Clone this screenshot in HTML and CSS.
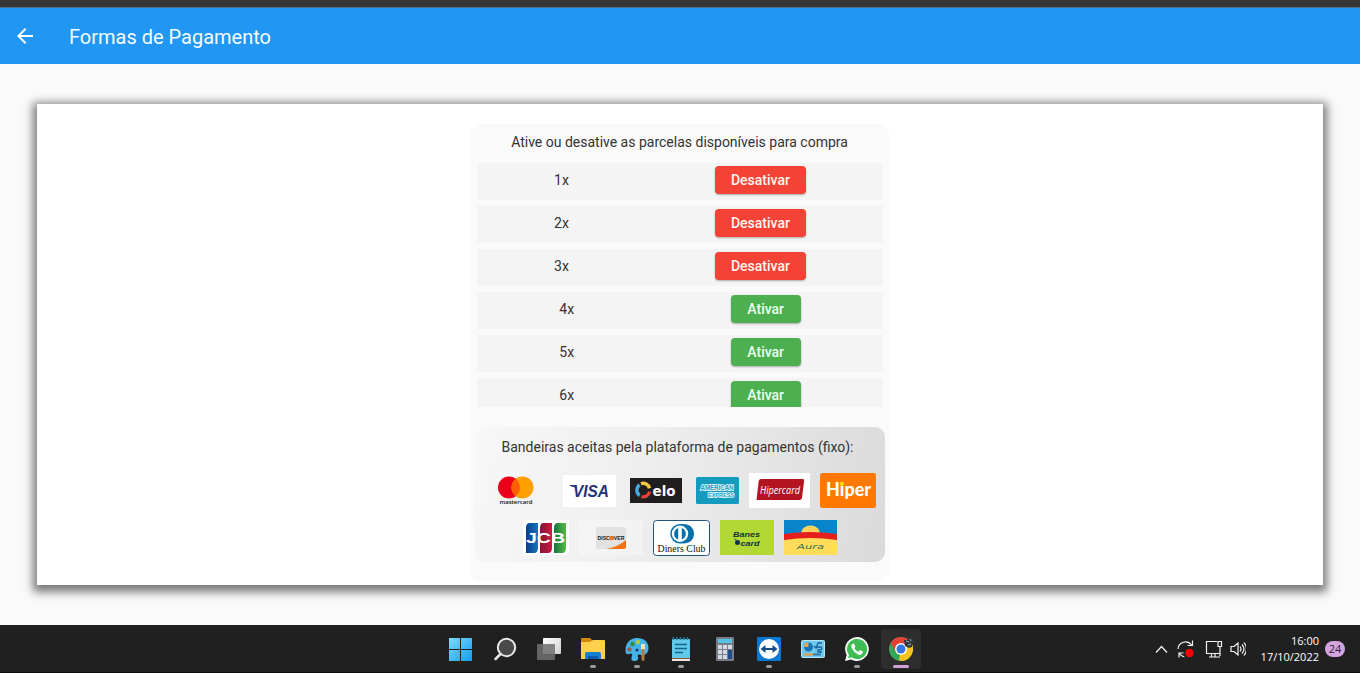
FILE: index.html
```html
<!DOCTYPE html>
<html lang="pt-BR">
<head>
<meta charset="utf-8">
<title>Formas de Pagamento</title>
<link rel="stylesheet" href="styles.css">
</head>
<body>
<div class="screen">
  <header class="appbar">
    <svg class="back" width="24" height="24" viewBox="0 0 24 24"><path fill="#fff" d="M20 11H7.830l5.590-5.590L12 4l-8 8 8 8 1.410-1.410L7.830 13H20v-2z"/></svg>
    <h1 class="title">Formas de Pagamento</h1>
  </header>
  <main class="content">
    <section class="card">
      <div class="panel">
        <p class="heading">Ative ou desative as parcelas disponíveis para compra</p>
        <div class="list">
          <div class="row"><span>1x</span><button class="btn off">Desativar</button></div>
          <div class="row"><span>2x</span><button class="btn off">Desativar</button></div>
          <div class="row"><span>3x</span><button class="btn off">Desativar</button></div>
          <div class="row"><span>4x</span><button class="btn on">Ativar</button></div>
          <div class="row"><span>5x</span><button class="btn on">Ativar</button></div>
          <div class="row"><span>6x</span><button class="btn on">Ativar</button></div>
        </div>
        <div class="brands">
          <p class="brands-title">Bandeiras aceitas pela plataforma de pagamentos (fixo):</p>
          <div class="brand-row first">
            <svg class="mastercard" width="37" height="35" viewBox="0 0 37 35">
              <circle cx="11" cy="14.500" r="11" fill="#eb001b"/><circle cx="24.500" cy="14.500" r="11" fill="#ff9f00"/>
              <path fill="#ff5f00" d="M17.700 5.800a11 11 0 0 1 0 17.400 11 11 0 0 1 0-17.400z"/>
              <text x="1.500" y="30.500" font-size="6" font-weight="600" textLength="33" fill="#111">mastercard</text>
            </svg>
            <svg class="visa" width="53" height="32" viewBox="0 0 53 32">
              <rect width="53" height="32" fill="#fff"/>
              <text class="logo-visa" x="10" y="22" font-size="16.500" textLength="36" lengthAdjust="spacingAndGlyphs" fill="#26337a">VISA</text>
              <path d="M7 10h6l1 3-7-2z" fill="#26337a"/>
            </svg>
            <svg class="elo" width="52" height="25" viewBox="0 0 52 25">
              <rect width="52" height="25" fill="#211e1f"/>
              <g fill="none" stroke-width="3.400"><path d="M11 5.700A6.600 6.600 0 0 1 19.500 10.200" stroke="#fbc73a"/><path d="M9.600 17.500A6.600 6.600 0 0 1 9.600 6.800" stroke="#46a8dc"/><path d="M19.700 13.700A6.600 6.600 0 0 1 11.500 18.600" stroke="#e24436"/></g>
              <text class="logo-round" x="22.500" y="17.500" font-size="14.500" textLength="23" lengthAdjust="spacingAndGlyphs" fill="#fff">elo</text>
            </svg>
            <svg class="amex" width="43" height="27" viewBox="0 0 43 27">
              <rect width="43" height="27" rx="1.500" fill="#149bbd"/>
              <g class="logo-sans" fill="#149bbd" stroke="#eefcff" stroke-width="1.600" paint-order="stroke">
                <text x="4.500" y="13" font-size="6.500" textLength="33" lengthAdjust="spacingAndGlyphs">AMERICAN</text>
                <text x="12" y="19.800" font-size="6" textLength="26" lengthAdjust="spacingAndGlyphs">EXPRESS</text>
              </g>
            </svg>
            <svg class="hipercard" width="61" height="35" viewBox="0 0 61 35">
              <rect width="61" height="35" fill="#fff"/>
              <path d="M12 6h41.500q2 0 1.600 2L53 25q-.4 2-2.400 2H7.500L9.700 8q.4-2 2.300-2z" fill="#b41421"/>
              <text class="logo-thin" x="11" y="20.500" font-size="11" textLength="40" lengthAdjust="spacingAndGlyphs" fill="#fff">Hipercard</text>
            </svg>
            <svg class="hiper" width="56" height="35" viewBox="0 0 56 35">
              <rect width="56" height="35" rx="2.500" fill="#ff7900"/>
              <text class="logo-hiper" x="6" y="23" font-size="18" textLength="45" lengthAdjust="spacingAndGlyphs" fill="#fff">Hiper</text>
              <circle cx="21.700" cy="11" r="2" fill="#ffd800"/>
            </svg>
          </div>
          <div class="brand-row second">
            <svg class="jcb" width="46" height="35" viewBox="0 0 46 35">
              <defs>
                <linearGradient id="jb"><stop stop-color="#063f8c"/><stop offset="1" stop-color="#1675b9"/></linearGradient>
                <linearGradient id="jr"><stop stop-color="#7c1739"/><stop offset="1" stop-color="#d21940"/></linearGradient>
                <linearGradient id="jg"><stop stop-color="#137541"/><stop offset="1" stop-color="#58b947"/></linearGradient>
              </defs>
              <path d="M5 0h41v29q0 6-5 6H0V6q0-6 5-6z" fill="#fff"/>
              <path d="M7 3h8v25q0 5-4 5H3V8q0-5 4-5z" fill="url(#jb)"/>
              <path d="M21 3h8v25q0 5-4 5h-8V8q0-5 4-5z" fill="url(#jr)"/>
              <path d="M35 3h8v25q0 5-4 5h-8V8q0-5 4-5z" fill="url(#jg)"/>
              <text class="logo-sans" x="3" y="22.500" font-size="14.500" textLength="39" lengthAdjust="spacingAndGlyphs" fill="#fff">JCB</text>
            </svg>
            <svg class="discover" width="64" height="35" viewBox="0 0 64 35">
              <defs><pattern id="check" width="2" height="2" patternUnits="userSpaceOnUse"><path d="M0 0h1v1H0zM1 1h1v1H1z" fill="#fff" opacity=".55"/></pattern></defs>
              <rect width="64" height="35" fill="url(#check)"/>
              <rect x="17" y="7" width="30" height="22" rx="2" fill="#e2e2e2"/>
              <path d="M47 20v7q0 2-2 2H27q12-2 20-9z" fill="#f47216"/>
              <text class="logo-sans" x="18.500" y="20.200" font-size="6" textLength="27" lengthAdjust="spacingAndGlyphs" fill="#171717">DISCOVER</text>
              <circle cx="32.500" cy="18" r="2.200" fill="#f47216"/>
            </svg>
            <svg class="diners" width="57" height="36" viewBox="0 0 57 36">
              <rect x=".5" y=".5" width="56" height="35" rx="3" fill="#fff" stroke="#24527b"/>
              <path d="M27 4h3c7 0 11 4 11 9.800S37 23.500 30 23.500h-3a9.750 9.750 0 0 1 0-19.500z" fill="#0871a9"/>
              <circle cx="27" cy="13.800" r="8.200" fill="#fff"/>
              <path d="M25.200 8a6.200 6.200 0 0 0 0 11.600zM28.800 8a6.200 6.200 0 0 1 0 11.600z" fill="#0871a9"/>
              <text class="logo-roman" x="4.500" y="31.500" font-size="10" textLength="48" lengthAdjust="spacingAndGlyphs" fill="#111">Diners Club</text>
            </svg>
            <svg class="banes" width="54" height="35" viewBox="0 0 54 35">
              <rect width="54" height="35" rx="1" fill="#b3d836"/>
              <g class="logo-visa" fill="#12323f"><text x="13" y="17" font-size="8" textLength="27" lengthAdjust="spacingAndGlyphs">Banes</text><text x="20.500" y="25.500" font-size="8" textLength="19" lengthAdjust="spacingAndGlyphs">card</text></g>
              <circle cx="17.500" cy="22.500" r="2.500" fill="#12323f"/><circle cx="15.500" cy="19.500" r="1" fill="#347b56"/>
            </svg>
            <svg class="aura" width="53" height="35" viewBox="0 0 53 35">
              <rect width="53" height="35" fill="#0884ca"/>
              <ellipse cx="26.500" cy="13.500" rx="9.500" ry="8" fill="#ffd35a"/>
              <path d="M0 14Q26 10 53 14v7H0z" fill="#e5201c"/>
              <path d="M0 20Q26 16 53 20v15H0z" fill="#ffdc5a"/>
              <text class="logo-wide" x="13" y="29" font-size="7" textLength="27" lengthAdjust="spacingAndGlyphs" fill="#2c6c55">Aura</text>
            </svg>
          </div>
        </div>
      </div>
    </section>
  </main>
  <footer class="taskbar">
    <nav class="apps">
      <div class="app"><svg width="32" height="32" viewBox="0 0 32 32"><defs><linearGradient id="win" x2="1" y2="1"><stop stop-color="#7ddcfc"/><stop offset="1" stop-color="#139bf0"/></linearGradient></defs><path fill="url(#win)" d="M4 4h11v11H4V4zM16 4h11v11H16zM4 16h11v11H4zM16 16h11v11H16z"/></svg></div>
      <div class="app"><svg width="32" height="32" viewBox="0 0 32 32"><circle cx="17.500" cy="13.500" r="8.700" fill="#4a4a4a" stroke="#e9e9e9" stroke-width="2"/><path d="M11.500 20l-5 5" stroke="#e9e9e9" stroke-width="2.500" stroke-linecap="round"/></svg></div>
      <div class="app"><svg width="32" height="32" viewBox="0 0 32 32"><defs><linearGradient id="tv" x2="1" y2="1"><stop stop-color="#fff"/><stop offset="1" stop-color="#d0d0d0"/></linearGradient></defs><rect x="10" y="4" width="18" height="16" rx="1" fill="url(#tv)"/><rect x="4" y="10" width="18" height="16" rx="1" fill="#707070" opacity=".86"/></svg></div>
      <div class="app"><svg width="32" height="32" viewBox="0 0 32 32"><path d="M4 5q0-1 1-1h8l3 3v5H4z" fill="#d48a08"/><path d="M4 8h9l3-2h11q1 0 1 1v18H4z" fill="#ffd04c"/><path d="M8 25v-5q0-2 2-2h12q2 0 2 2v5z" fill="#1680d2"/><path d="M11 22h10v3H11z" fill="#075ba7"/></svg><i class="dot"></i></div>
      <div class="app"><svg width="32" height="32" viewBox="0 0 32 32"><path d="M16 4c7 0 11.500 4 11.500 10 0 5-3.500 8-7.500 7-3-1-4 0-3 2s-1 4.500-4 4c-3 0-3-3-2-5 1-3-1-3-3-2-3 1-3.500-1-3.500-4C4.500 9 9 4 16 4z" fill="#43b4ea"/><circle cx="8.500" cy="15.500" r="2.200" fill="#9d5b4c"/><circle cx="11.500" cy="10" r="2.200" fill="#368a43"/><circle cx="17" cy="8" r="2.200" fill="#b7cb36"/><circle cx="16" cy="16" r="1.600" fill="#173b6b"/><path d="M20 10h4v6h-4z" fill="#eee1b9"/><path d="M20.500 15h3v10q0 2-1.500 2t-1.500-2z" fill="#b27b3d"/></svg><i class="dot"></i></div>
      <div class="app"><svg width="32" height="32" viewBox="0 0 32 32"><path d="M7 5h18v19H7z" fill="#62c8e9"/><path d="M7 24h18v3H7z" fill="#e6e6e6"/><path d="M7 24h18v1H7z" fill="#98562d"/><path d="M8.500 3v3M12 3v3M15.500 3v3M19 3v3M22.500 3v3" stroke="#25799b" stroke-width="1.500"/><path d="M10 10.500h12M10 14.500h12M10 18.500h8" stroke="#14658a" stroke-width="1.700"/></svg><i class="dot"></i></div>
      <div class="app"><svg width="32" height="32" viewBox="0 0 32 32"><rect x="7" y="3" width="18" height="24" rx="1" fill="#777c85"/><path d="M9 5h14v4H9z" fill="#55c3e5"/><path d="M9 11h4v4H9zM14 11h4v4h-4zM19 11h4v4h-4zM9 16h4v4H9zM14 16h4v4h-4zM9 21h4v4H9zM14 21h4v4h-4z" fill="#d5dae5"/><path d="M19 16h4v9h-4z" fill="#204c89"/></svg></div>
      <div class="app"><svg width="32" height="32" viewBox="0 0 32 32"><rect x="4" y="3" width="24" height="24" rx="1" fill="#0878d2"/><circle cx="16" cy="15" r="10" fill="#fff"/><path d="M7.500 15l5-4v3h7v-3l5 4-5 4v-3h-7v3z" fill="#164d88"/></svg><i class="dot"></i></div>
      <div class="app"><svg width="32" height="32" viewBox="0 0 32 32"><rect x="4.500" y="6.500" width="23" height="17" rx="1" fill="#72c9ef" stroke="#b1e5f7"/><circle cx="11.500" cy="13" r="4.500" fill="#1874b8"/><path d="M11.500 13V8.500a4.500 4.500 0 0 0-4.500 4.500z" fill="#f5a335"/><path d="M17 12l2 2 2-5h4M20 13h4q2 2-1 3h-3M20 18h5" fill="none" stroke="#18629b" stroke-width="1.400"/><path d="M7 20.500h9" stroke="#e89a3d" stroke-width="2"/><path d="M16 20.500h8" stroke="#2d77a9" stroke-width="2"/></svg></div>
      <div class="app"><svg width="32" height="32" viewBox="0 0 32 32"><path d="M16 3a12 12 0 1 1-6 22.500L4 27l1.700-6A12 12 0 0 1 16 3z" fill="#f5fff5"/><path d="M16 5a10 10 0 1 1-5.500 18.300L7 24.200l1-3.300A10 10 0 0 1 16 5z" fill="#3fbd55"/><path d="M12 9.500c-2 1-2 3-1 5a13 13 0 0 0 6 6c2 1 4 0 5-2v-1l-3-1.500-1.600 1.700c-2-.8-3.200-2-4-3.800l1-1.200-1.200-3z" fill="#fff"/></svg><i class="dot"></i></div>
      <div class="app active"><svg width="32" height="32" viewBox="0 0 32 32"><circle cx="16" cy="15" r="12" fill="#35a853"/><path d="M16 15L5.600 9A12 12 0 0 1 26.400 9z" fill="#e34133"/><path d="M16 15l10.400-6A12 12 0 0 1 16 27l-2-1z" fill="#fbc21a"/><path d="M5.600 9l5.200 9L16 15 13 9z" fill="#e34133"/><path d="M16 9h10.400L16 15z" fill="#e34133"/><circle cx="16" cy="15" r="6" fill="#fff"/><circle cx="16" cy="15" r="4.500" fill="#3478df"/><path d="M19 6l3 0 2-3 1 2 3-3-1 4 2 1-2 2v4l-3 1-4-2z" fill="#343b3f"/><path d="M21 7l3 1M25 5l1 2M23 11l3-1" stroke="#91a9b3"/></svg><i class="dot wide"></i></div>
    </nav>
    <div class="tray">
      <svg width="92" height="24" viewBox="0 0 92 24" fill="none" stroke="#f4f4f4" stroke-width="1.200">
        <path d="M2 15.500l5.500-6 5.500 6"/>
        <path d="M24 12a7.500 7.500 0 0 1 13.500-4M38.500 3.500v5h-5M25 20.500v-4.500h4.500M25.300 16.500q2 3 5 3.300"/>
        <circle cx="35.500" cy="16" r="4.200" fill="#f20708" stroke="none"/>
        <path d="M63 4.500H52.500v12H66V11M55 20h11M57.500 16.500V20M61 16.500V20M64 4.500h3.500v5H64zM66 9.500V19"/>
        <path d="M77 9.500h3l4-3.500v12l-4-3.500h-3zM86 9.500q2 2.500 0 5M88 7.500q4 4.500 0 9M90 5.500q5 6.500 0 13"/>
      </svg>
      <div class="clock"><span>16:00</span><span>17/10/2022</span></div>
      <span class="badge">24</span>
    </div>
  </footer>
</div>
</body>
</html>
```

FILE: styles.css
```css
* { box-sizing: border-box; }
body { margin: 0; font-family: Roboto, "Liberation Sans", sans-serif; color: #333; }
svg { display: block; flex: none; }
p, h1 { margin: 0; }
.screen { height: 673px; display: flex; flex-direction: column; background: #fafafa; overflow: hidden; }
.appbar { height: 64px; flex: none; border-top: 7px solid #353535; background: #2196f3; box-shadow: inset 0 1px #4a718f; display: flex; align-items: center; padding-left: 13px; }
.title { margin-left: 32px; padding-top: 2px; font-size: 20px; font-weight: 400; line-height: 24px; color: #f5fcff; }
.content { flex: 1; padding: 40px 37px; }
.card { height: 481px; background: #fff; box-shadow: 0 3px 9px 4px rgba(0, 0, 0, .52); display: flex; justify-content: center; padding: 20px 1px 0 0; }
.panel { width: 419px; height: 457px; border-radius: 10px; background: #fafafa; font-size: 14px; line-height: 18px; display: flex; flex-direction: column; }
.heading { text-align: center; padding-top: 9px; height: 39px; flex: none; }
.list { height: 244px; margin: 0 6px 0 7px; overflow: hidden; flex: none; }
.row { height: 37px; margin-bottom: 6px; padding: 3px 4px 6px; background: #f4f4f4; display: flex; justify-content: space-around; align-items: center; }
.btn { height: 28px; padding: 0; border: 0; border-radius: 4px; color: #fff4f2; font: 500 14px Roboto, sans-serif; box-shadow: 0 1px 2px rgba(0, 0, 0, .3); }
.off { width: 91px; background: #f44336; }
.on { width: 70px; background: #4caf50; color: #effff0; }
.brands { width: 410px; height: 135px; margin: 20px 0 0 4.500px; padding-top: 11px; border-radius: 10px; background: linear-gradient(100deg, #f7f7f7, #f0f0f0 35%, #dadada); }
.brands-title { text-align: center; padding-right: 4px; }
.brand-row { display: flex; align-items: center; gap: 10px; height: 35px; }
.first { margin-top: 17px; padding-left: 23px; }
.second { margin-top: 12px; padding-left: 48px; }
.mastercard { margin-right: 18px; }
.elo, .amex { margin-left: 4px; }
.mastercard text { font-family: "Open Sans", sans-serif; }
.logo-visa { font-family: "Liberation Sans", sans-serif; font-weight: 700; font-style: italic; }
.logo-round { font-family: "DejaVu Sans", sans-serif; font-weight: 700; }
.logo-sans { font-family: "Liberation Sans", sans-serif; font-weight: 700; }
.logo-thin { font-family: "Open Sans", sans-serif; font-style: italic; }
.logo-hiper { font-family: Lato, sans-serif; font-weight: 900; }
.logo-roman { font-family: "Liberation Serif", serif; }
.logo-wide { font-family: "DejaVu Sans", sans-serif; font-style: italic; }
.taskbar { height: 48px; flex: none; background: #202020; border-bottom: 1px solid #0b0b0b; display: grid; grid-template-columns: 438px 486px 1fr; }
.apps { grid-column: 2; display: flex; }
.app { width: 44px; height: 48px; padding: 9px 6px 0 7px; display: flex; flex: none; flex-direction: column; align-items: center; }
.active { width: 40px; height: 40px; margin: 4px 0 0 3px; padding: 5px 4px 0; background: #2d2d2d; border-radius: 4px; }
.dot { width: 6px; height: 3px; flex: none; margin-top: -1px; border-radius: 2px; background: #999; }
.wide { width: 16px; background: #d0a2dc; }
.tray { display: flex; align-items: center; justify-content: flex-end; padding-right: 15px; }
.clock { width: 73px; margin-right: 6px; display: flex; flex-direction: column; align-items: flex-end; font: 11px/16px "Open Sans", sans-serif; color: #fff; white-space: nowrap; }
.badge { width: 20px; height: 16px; border-radius: 8px; background: #d5a4df; color: #30203a; font: 11px/16px "Open Sans", sans-serif; text-align: center; }
```
